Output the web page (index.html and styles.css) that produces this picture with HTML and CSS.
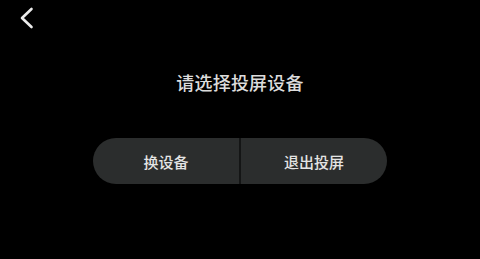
FILE: index.html
```html
<!DOCTYPE html>
<html>
<head>
<meta charset="utf-8">
<link rel="stylesheet" href="styles.css">
</head>
<body>
<div class="screen">
  <div class="topbar">
    <svg class="back" width="16" height="22" viewBox="0 0 16 22"><path d="M12.5 2 L3 11 L12.5 20" fill="none" stroke="#ececec" stroke-width="2.6" stroke-linecap="round" stroke-linejoin="round"/></svg>
  </div>
  <div class="title">请选择投屏设备</div>
  <div class="actions">
    <div class="btn">换设备</div>
    <div class="sep"></div>
    <div class="btn">退出投屏</div>
  </div>
</div>
</body>
</html>
```
FILE: styles.css
```css
html, body {
  margin: 0;
  padding: 0;
  background: #000;
}
.screen {
  width: 480px;
  height: 259px;
  display: flex;
  flex-direction: column;
  align-items: center;
  font-family: "Noto Sans CJK SC", "Noto Sans", sans-serif;
}
.topbar {
  align-self: stretch;
  height: 29px;
  padding: 7px 0 0 19px;
  box-sizing: border-box;
}
.back {
  display: block;
}
.title {
  margin-top: 41px;
  color: #dcdcdc;
  font-size: 18px;
  font-weight: 500;
  line-height: 24px;
  letter-spacing: 0.2px;
}
.actions {
  margin-top: 44px;
  width: 294px;
  height: 46px;
  border-radius: 23px;
  background: #2b2d2d;
  display: flex;
  overflow: hidden;
}
.btn {
  flex: 1;
  display: flex;
  align-items: center;
  justify-content: center;
  color: #e4e4e4;
  font-size: 15px;
  font-weight: 500;
}
.sep {
  width: 2px;
  background: #141515;
}
```
